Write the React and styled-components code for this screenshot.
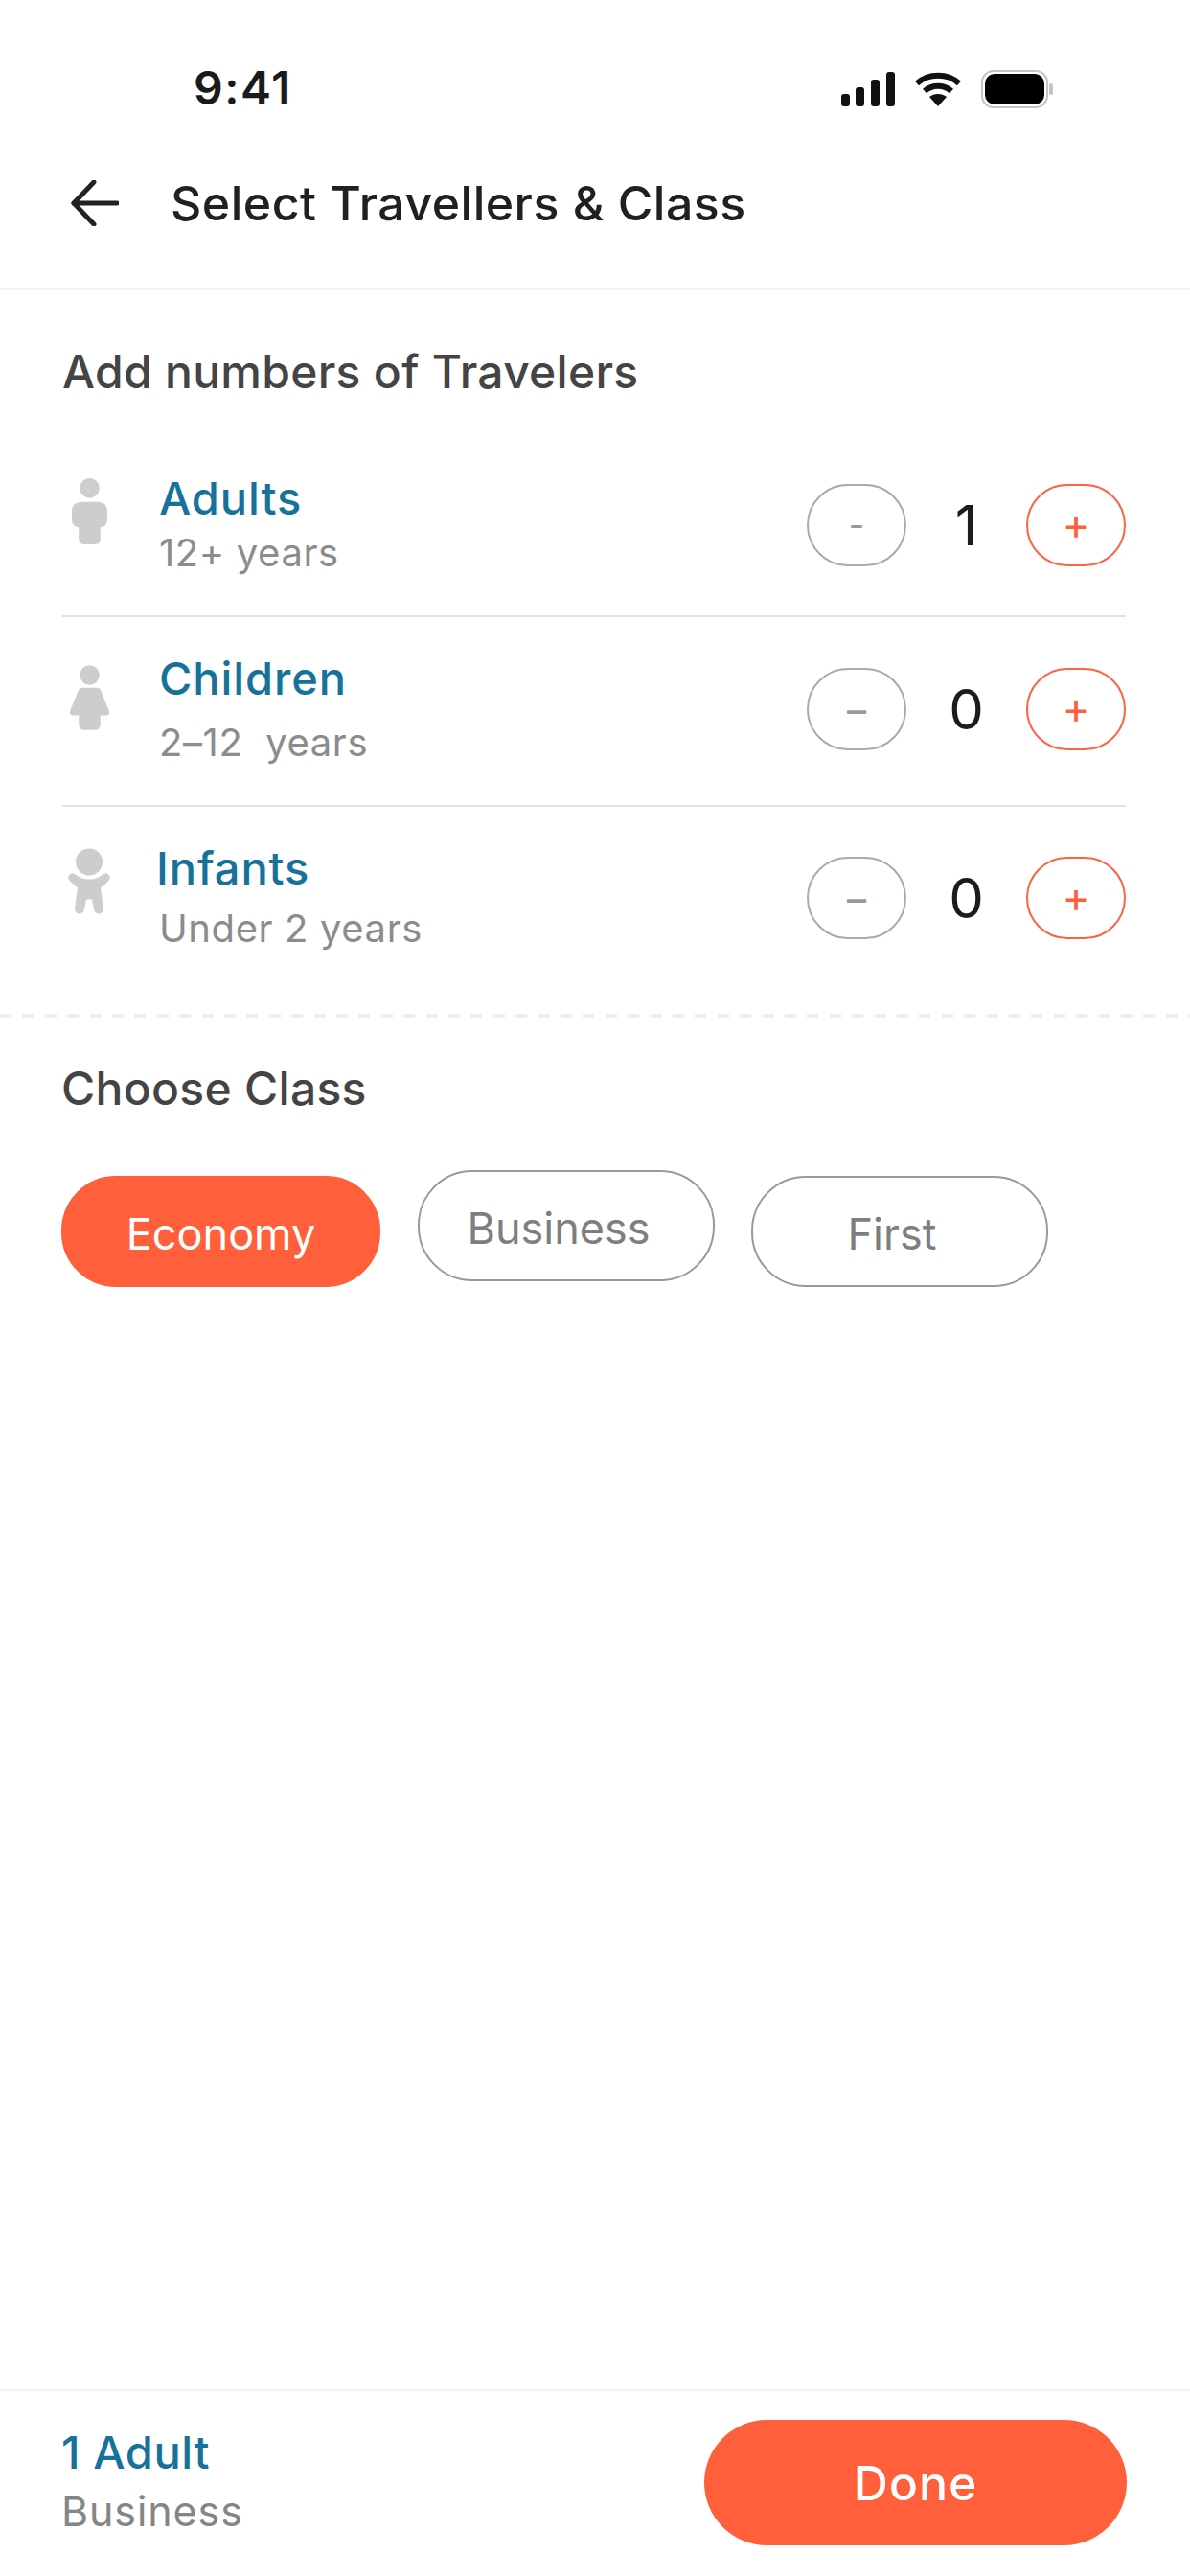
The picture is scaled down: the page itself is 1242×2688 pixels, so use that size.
import React from 'react';
import styled, { createGlobalStyle } from 'styled-components';

const GlobalStyle = createGlobalStyle`
  html, body {
    margin: 0;
    padding: 0;
    background: #fff;
  }
  * {
    box-sizing: border-box;
  }
`;

const Page = styled.div`
  width: 1242px;
  height: 2688px;
  display: flex;
  flex-direction: column;
  background: #fff;
  font-family: Inter, "Liberation Sans", sans-serif;
`;

// Top bar
const TopBar = styled.header`
  height: 302px;
  flex-shrink: 0;
  border-bottom: 2px solid #f0f0f0;
  box-shadow: 0 2px 6px rgba(0, 0, 0, 0.04);
`;

const StatusBar = styled.div`
  height: 150px;
  padding: 64px 142px 0 202px;
  display: flex;
  justify-content: space-between;
  align-items: flex-start;
`;

const Clock = styled.span`
  font-size: 48px;
  line-height: 56px;
  font-weight: 600;
  color: #1a1a1a;
  letter-spacing: 1.5px;
`;

const StatusIcons = styled.div`
  display: flex;
  align-items: center;
  gap: 20px;
  margin-top: 9px;
`;

const NavRow = styled.div`
  display: flex;
  align-items: center;
  gap: 54px;
  padding: 0 0 0 74px;
  margin-top: 28px;
`;

const Title = styled.h1`
  margin: 0;
  font-size: 50px;
  line-height: 68px;
  font-weight: 500;
  color: #202020;
  letter-spacing: 0.5px;
`;

// Travellers
const Content = styled.main`
  flex: 1;
`;

const Travellers = styled.section`
  padding: 0 67px 0 65px;
`;

const Heading = styled.h2`
  margin: 0;
  padding-top: ${props => props.$top}px;
  height: ${props => props.$height}px;
  font-size: 48px;
  line-height: 60px;
  font-weight: 500;
  color: #444;
  letter-spacing: 0.3px;
`;

const Row = styled.div`
  height: ${props => props.$height}px;
  display: grid;
  grid-template-columns: 56px 1fr auto;
  column-gap: 45px;
  align-items: start;
  border-bottom: ${props => props.$last ? 'none' : '2px solid #e3e3e3'};
`;

const PersonIcon = styled.div`
  padding-top: ${props => props.$top}px;
  display: flex;
  justify-content: center;
`;

const Info = styled.div`
  padding-top: ${props => props.$top}px;
`;

const Name = styled.div`
  font-size: 47px;
  line-height: 56px;
  font-weight: 500;
  color: #17729a;
  margin-left: ${props => props.$nudge || 0}px;
  letter-spacing: 0.9px;
`;

const Age = styled.div`
  margin-top: ${props => props.$gap}px;
  font-size: 40px;
  line-height: 50px;
  color: #8c8c8c;
  white-space: pre;
  letter-spacing: 0.6px;
`;

const Stepper = styled.div`
  padding-top: ${props => props.$top}px;
  display: flex;
  align-items: center;
`;

const StepButton = styled.div`
  width: 104px;
  height: 86px;
  padding-bottom: ${props => props.$accent ? 3 : 0}px;
  display: flex;
  align-items: center;
  justify-content: center;
  border-radius: 43px;
  border: 2px solid ${props => props.$accent ? '#ff6240' : '#aaa'};
  color: ${props => props.$accent ? '#ff5f3a' : '#999'};
  font-size: ${props => props.$size || 44}px;
  font-weight: 400;
  line-height: 1;
`;

const Count = styled.div`
  width: 125px;
  text-align: center;
  font-size: 58px;
  line-height: 86px;
  font-weight: 400;
  color: #1c1c1c;
`;

const DashedLine = styled.div`
  height: 4px;
  background: repeating-linear-gradient(to right, #eee 0, #eee 12px, transparent 12px, transparent 23.4px);
`;

// Class choice
const ClassSection = styled.section`
  padding: 0 64px;
`;

const Pills = styled.div`
  display: flex;
  align-items: flex-start;
`;

const Pill = styled.div`
  width: ${props => props.$width}px;
  height: 116px;
  margin-left: ${props => props.$left || 0}px;
  margin-top: ${props => props.$top || 0}px;
  padding-top: 4px;
  padding-right: ${props => props.$active ? 0 : 16}px;
  display: flex;
  align-items: center;
  justify-content: center;
  border-radius: 57px;
  border: 2px solid ${props => props.$active ? '#ff5f3a' : '#999'};
  background: ${props => props.$active ? '#ff5f3a' : '#fff'};
  color: ${props => props.$active ? '#fff' : '#7e7e7e'};
  font-size: 45px;
  letter-spacing: 0;
`;

// Bottom bar
const BottomBar = styled.footer`
  height: 195px;
  flex-shrink: 0;
  padding: 30px 66px 0 64px;
  display: flex;
  justify-content: space-between;
  align-items: flex-start;
  border-top: 2px solid #f3f3f3;
`;

const Summary = styled.div`
  padding-top: 6px;
`;

const SummaryCount = styled.div`
  font-size: 47px;
  line-height: 56px;
  font-weight: 500;
  color: #17729a;
  letter-spacing: 0.6px;
`;

const SummaryClass = styled.div`
  margin-top: 7px;
  font-size: 43px;
  line-height: 52px;
  color: #858585;
  letter-spacing: 0.9px;
`;

const DoneButton = styled.div`
  width: 441px;
  height: 131px;
  display: flex;
  align-items: center;
  justify-content: center;
  border-radius: 66px;
  background: #ff5f3a;
  color: #fff;
  font-size: 50px;
  font-weight: 500;
  letter-spacing: 1px;
`;

const SignalIcon = () => (
  <svg width="56" height="36" viewBox="0 0 56 36">
    <rect x="0" y="23" width="9" height="13" rx="3" fill="#111" />
    <rect x="15" y="16" width="9" height="20" rx="3" fill="#111" />
    <rect x="31" y="8" width="9" height="28" rx="3" fill="#111" />
    <rect x="47" y="0" width="9" height="36" rx="3" fill="#111" />
  </svg>
);

const WifiIcon = () => (
  <svg width="50" height="36" viewBox="0 0 50 36" fill="none" stroke="#111" strokeWidth="6">
    <path d="M3 12 C15 1 35 1 47 12" />
    <path d="M11 20 C19 13 31 13 39 20" />
    <path d="M25 36 L16 26 C21 22 29 22 34 26 Z" fill="#111" stroke="none" />
  </svg>
);

const BatteryIcon = () => (
  <svg width="76" height="40" viewBox="0 0 76 40">
    <rect x="1" y="1" width="68" height="38" rx="12" fill="#fff" stroke="#c4c4c4" strokeWidth="2" />
    <rect x="4" y="4" width="62" height="32" rx="10" fill="#000" />
    <rect x="71" y="14" width="4" height="12" rx="2" fill="#c4c4c4" />
  </svg>
);

const BackArrow = () => (
  <svg width="50" height="48" viewBox="0 0 50 48" fill="none" stroke="#222" strokeWidth="5" strokeLinecap="round" strokeLinejoin="round">
    <path d="M48 24 H3" />
    <path d="M24 2 L3 24 L24 46" />
  </svg>
);

const AdultIcon = () => (
  <svg width="37" height="69" viewBox="0 0 36 67" fill="#cdcdcd">
    <circle cx="18" cy="10" r="10" />
    <path d="M10 24 H26 Q36 24 36 34 V42 Q36 49 29 50 V62 Q29 67 24 67 H12 Q7 67 7 62 V50 Q0 49 0 42 V34 Q0 24 10 24 Z" />
  </svg>
);

const ChildIcon = () => (
  <svg width="43" height="68" viewBox="0 0 42 66" fill="#cdcdcd">
    <circle cx="21" cy="10" r="10" />
    <path d="M14 23 H28 Q32 23 33 27 L41 47 Q42 51 38 51 H32 V60 Q32 66 26 66 H16 Q10 66 10 60 V51 H4 Q0 51 1 47 L9 27 Q10 23 14 23 Z" />
  </svg>
);

const InfantIcon = () => (
  <svg width="46" height="69" viewBox="0 0 46 68" fill="#cdcdcd">
    <circle cx="23" cy="14" r="14" />
    <path d="M3 27 Q6 24 10 28 Q15 32 23 32 Q31 32 36 28 Q40 24 43 27 Q47 31 42 35 L35 41 L38 62 Q38 68 33 68 Q29 68 28 63 L26 53 H20 L18 63 Q17 68 13 68 Q8 68 8 62 L11 41 L4 35 Q-1 31 3 27 Z" />
  </svg>
);

const travellers = [
  { name: 'Adults', age: '12+ years', count: 1, minus: '-', minusSize: 36, Icon: AdultIcon, height: 186, iconTop: 41, infoTop: 34, ageGap: 4, stepTop: 47 },
  { name: 'Children', age: '2–12  years', count: 0, minus: '−', Icon: ChildIcon, height: 198, iconTop: 50, infoTop: 36, ageGap: 14, stepTop: 53 },
  { name: 'Infants', age: 'Under 2 years', count: 0, minus: '−', Icon: InfantIcon, height: 216, iconTop: 43, infoTop: 36, ageGap: 10, stepTop: 52, nudge: -3, last: true },
];

const App = () => {
  return (
    <Page>
      <GlobalStyle />
      <TopBar>
        <StatusBar>
          <Clock>9:41</Clock>
          <StatusIcons>
            <SignalIcon />
            <WifiIcon />
            <BatteryIcon />
          </StatusIcons>
        </StatusBar>
        <NavRow>
          <BackArrow />
          <Title>Select Travellers &amp; Class</Title>
        </NavRow>
      </TopBar>

      <Content>
        <Travellers>
          <Heading $top={56} $height={156}>Add numbers of Travelers</Heading>
          {travellers.map(item => (
            <Row key={item.name} $height={item.height} $last={item.last}>
              <PersonIcon $top={item.iconTop}><item.Icon /></PersonIcon>
              <Info $top={item.infoTop}>
                <Name $nudge={item.nudge}>{item.name}</Name>
                <Age $gap={item.ageGap}>{item.age}</Age>
              </Info>
              <Stepper $top={item.stepTop}>
                <StepButton $size={item.minusSize}>{item.minus}</StepButton>
                <Count>{item.count}</Count>
                <StepButton $accent>+</StepButton>
              </Stepper>
            </Row>
          ))}
        </Travellers>

        <DashedLine />

        <ClassSection>
          <Heading $top={44} $height={159}>Choose Class</Heading>
          <Pills>
            <Pill $active $width={333} $top={6}>Economy</Pill>
            <Pill $width={310} $left={39}>Business</Pill>
            <Pill $width={310} $left={38} $top={6}>First</Pill>
          </Pills>
        </ClassSection>
      </Content>

      <BottomBar>
        <Summary>
          <SummaryCount>1 Adult</SummaryCount>
          <SummaryClass>Business</SummaryClass>
        </Summary>
        <DoneButton>Done</DoneButton>
      </BottomBar>
    </Page>
  );
};

export default App;
